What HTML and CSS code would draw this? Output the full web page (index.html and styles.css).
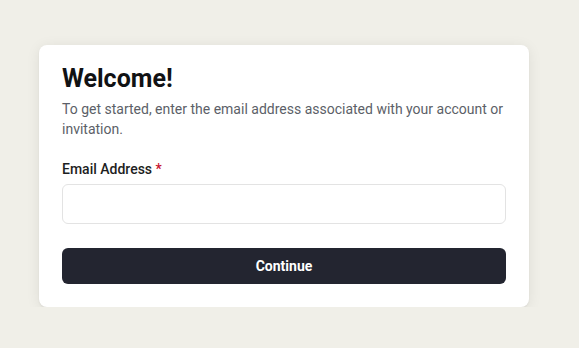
FILE: index.html
```html
<!DOCTYPE html>
<html lang="en">
<head>
    <meta charset="UTF-8">
    <meta name="viewport" content="width=device-width, initial-scale=1.0">
    <title>Welcome</title>
    <link rel="stylesheet" href="styles.css">
</head>
<body>
    <div class="card">
        <h1 class="title">Welcome!</h1>
        <p class="intro">To get started, enter the email address associated with your account or invitation.</p>
        <form class="login-form" onsubmit="return false">
            <label class="field-label" for="email">Email Address <span class="req">*</span></label>
            <input type="email" id="email" class="field-input">
            <button type="submit" class="btn">Continue</button>
        </form>
    </div>
</body>
</html>
```

FILE: styles.css
```css
body{
    margin:0;
    background:#f0efe8;
    font-family: Roboto, "Liberation Sans", sans-serif;
}
.card{
    width:490px;
    box-sizing:border-box;
    margin:45px 0 0 39px;
    padding:20px 23px 23px;
    background:#fff;
    border-radius:8px;
    box-shadow:0 2px 14px rgba(0,0,0,0.08), 0 1px 2px rgba(0,0,0,0.06);
}
.title{
    margin:0 0 6px;
    font-size:25px;
    line-height:28px;
    font-weight:700;
    color:#111214;
}
.intro{
    margin:0;
    font-size:14px;
    line-height:20px;
    color:#5c5f68;
}
.login-form{
    display:flex;
    flex-direction:column;
    margin-top:20px;
}
.field-label{
    font-size:14px;
    line-height:20px;
    font-weight:500;
    color:#1d1e22;
    margin-bottom:5px;
}
.req{
    color:#c8102e;
}
.field-input{
    height:40px;
    box-sizing:border-box;
    border:1px solid #e3e3e3;
    border-radius:6px;
    padding:0 12px;
    font-size:14px;
    outline:none;
}
.btn{
    margin-top:24px;
    height:36px;
    border:0;
    border-radius:6px;
    background:#232530;
    color:#fff;
    font-family:inherit;
    font-size:14px;
    font-weight:700;
    cursor:pointer;
}
```
